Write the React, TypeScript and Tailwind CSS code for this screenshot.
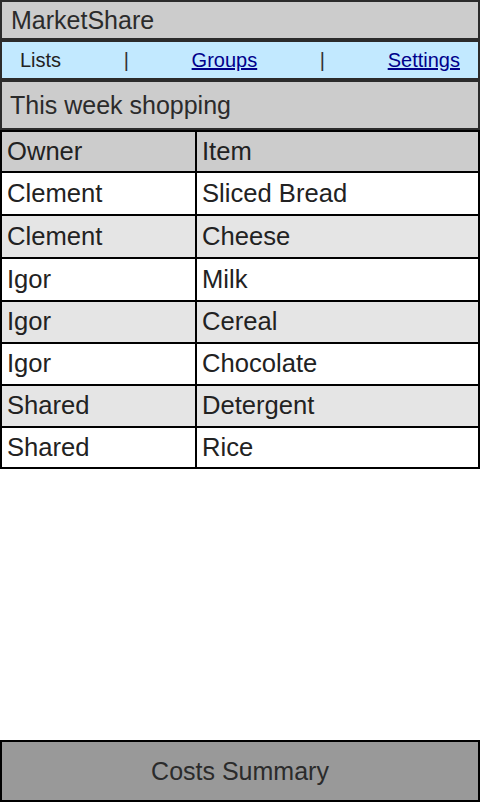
import React from "react";

const rows: [string, string, string][] = [
  ["Clement", "Sliced Bread", "h-[43px]"],
  ["Clement", "Cheese", "h-[43px]"],
  ["Igor", "Milk", "h-[43px]"],
  ["Igor", "Cereal", "h-[42px]"],
  ["Igor", "Chocolate", "h-[42px]"],
  ["Shared", "Detergent", "h-[42px]"],
  ["Shared", "Rice", "h-[41px]"],
];

export default function App() {
  return (
    <div
      className="flex min-h-[802px] w-[480px] flex-col bg-white text-[#2b2b2b]"
      style={{ fontFamily: '"Liberation Sans", Arial, sans-serif' }}
    >
      <div className="flex h-10 items-center border-2 border-[#2b2b2b] bg-[#cccccc] pl-[9px] text-[25px] leading-none">
        MarketShare
      </div>
      <div className="flex h-10 items-center justify-between border-2 border-[#2b2b2b] bg-[#c2e9ff] px-[18px] text-[20px] leading-none">
        <span className="text-[#222]">Lists</span>
        <span className="text-[#333]">|</span>
        <a href="#" className="text-[#00008b] underline">Groups</a>
        <span className="text-[#333]">|</span>
        <a href="#" className="text-[#00008b] underline">Settings</a>
      </div>
      <div className="flex h-[50px] items-center border-2 border-[#2b2b2b] bg-[#cccccc] pl-[8px] text-[25px] leading-none">
        This week shopping
      </div>
      <div className="border-2 border-b-0 border-black text-[25.6px] leading-none text-[#222]">
        <div className="grid h-[41px] grid-cols-[195px_1fr] border-b-2 border-black bg-[#cccccc]">
          <div className="flex items-center border-r-2 border-black pl-[5px]">Owner</div>
          <div className="flex items-center pl-[5px]">Item</div>
        </div>
        {rows.map(([owner, item, h], i) => (
          <div
            key={i}
            className={`grid grid-cols-[195px_1fr] border-b-2 border-black ${h} ${
              i % 2 === 1 ? "bg-[#e5e5e5]" : "bg-white"
            }`}
          >
            <div className="flex items-center border-r-2 border-black pl-[5px]">{owner}</div>
            <div className="flex items-center pl-[5px]">{item}</div>
          </div>
        ))}
      </div>
      <div className="flex-1" />
      <div className="flex h-[62px] items-center justify-center border-2 border-black bg-[#999999] text-[25px] leading-none text-[#2b2b2b]">
        Costs Summary
      </div>
    </div>
  );
}
